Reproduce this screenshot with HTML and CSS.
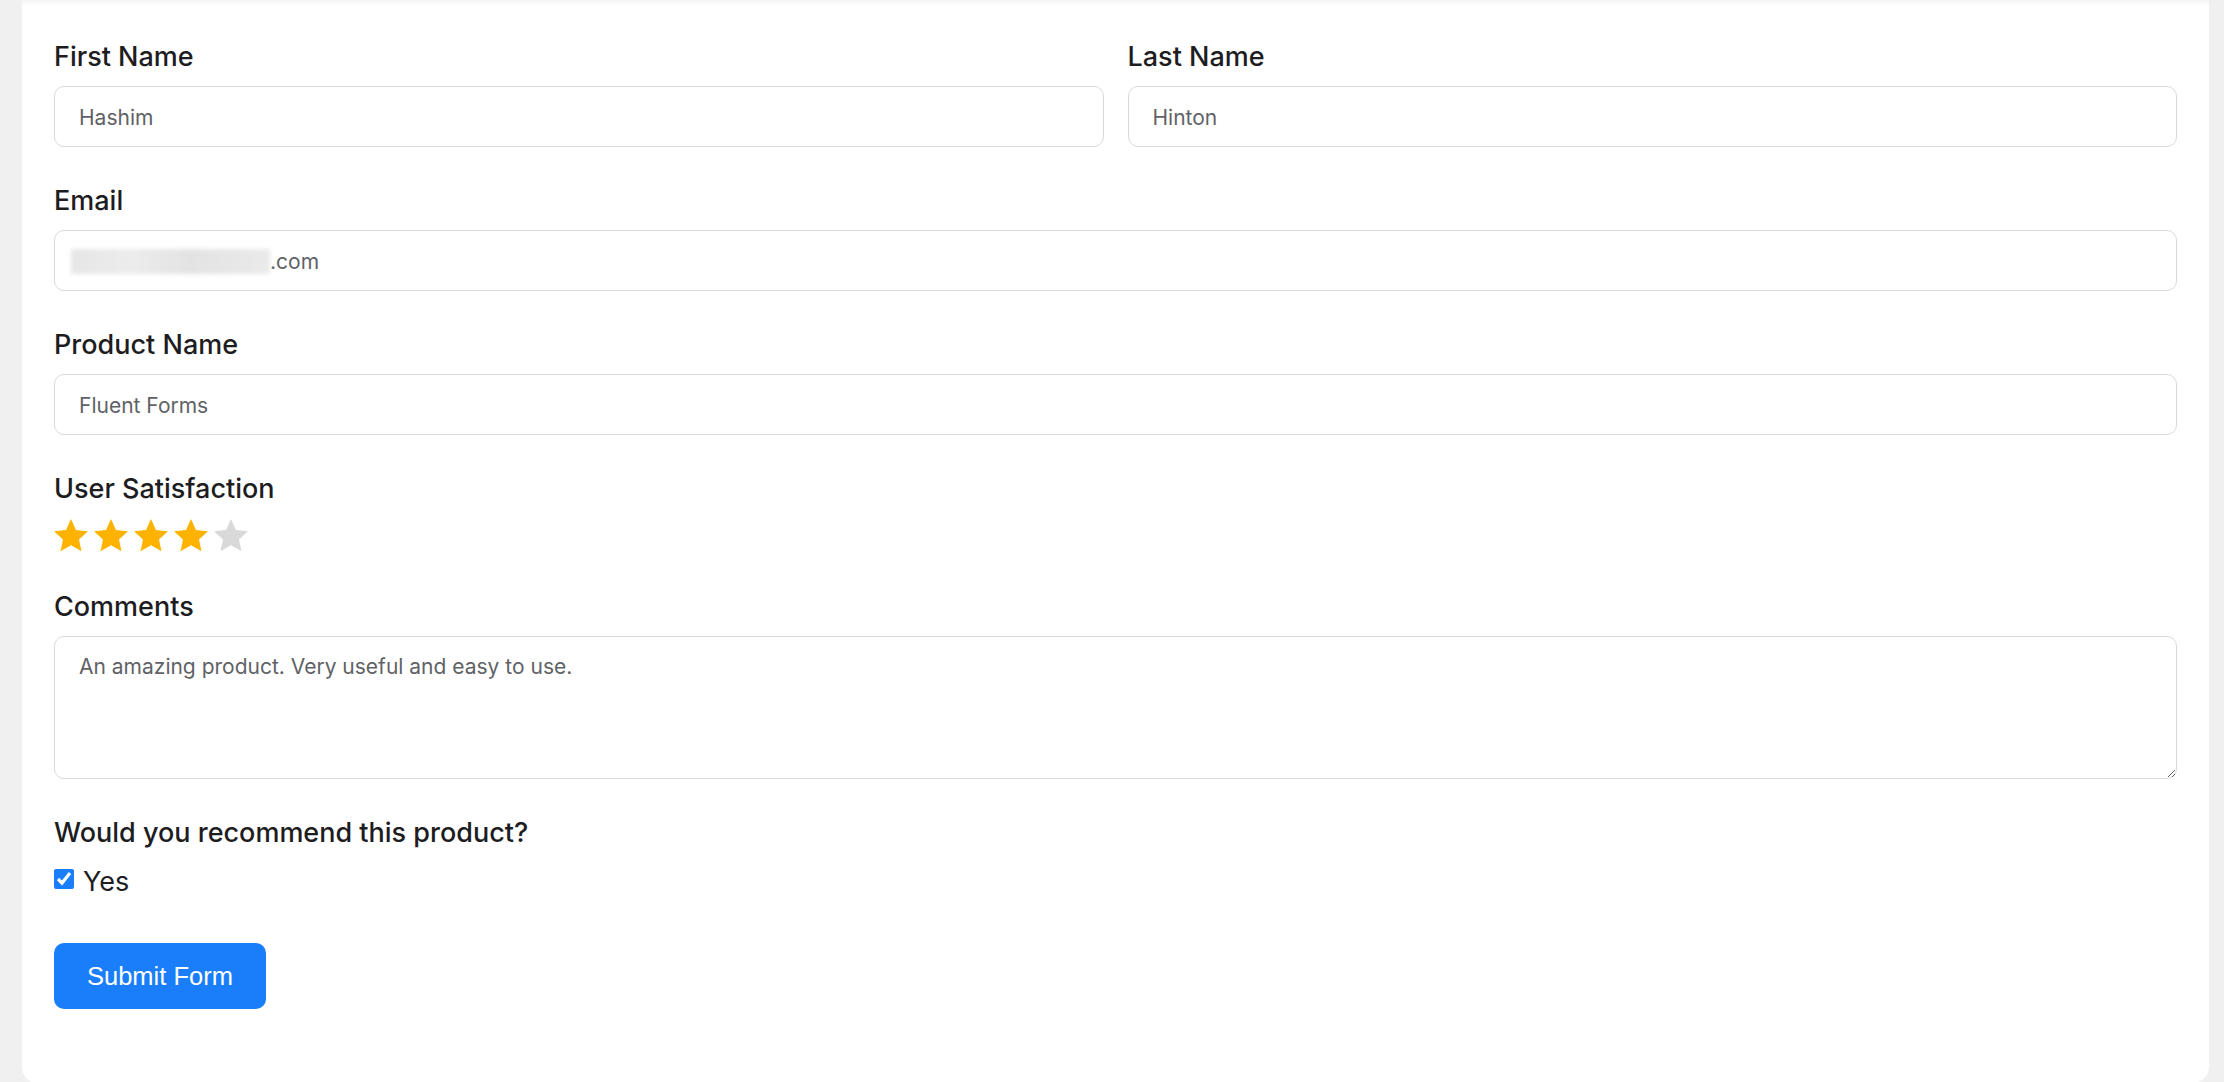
FILE: index.html
```html
<!DOCTYPE html>
<html lang="en">
<head>
<meta charset="utf-8">
<title>Product Feedback Form</title>
<link rel="stylesheet" href="styles.css">
</head>
<body>
<div class="card">
  <form class="form">
    <div class="row">
      <div class="field">
        <label class="label" for="fname">First Name</label>
        <input class="input" id="fname" type="text" value="Hashim">
      </div>
      <div class="field">
        <label class="label" for="lname">Last Name</label>
        <input class="input" id="lname" type="text" value="Hinton">
      </div>
    </div>
    <div class="field">
      <label class="label">Email</label>
      <div class="input email"><span class="redact"></span><span>.com</span></div>
    </div>
    <div class="field">
      <label class="label" for="pname">Product Name</label>
      <input class="input" id="pname" type="text" value="Fluent Forms">
    </div>
    <div class="field">
      <label class="label">User Satisfaction</label>
      <div class="stars">
        <svg class="star on" viewBox="0 0 34 33"><polygon points="17,0 21.94,11.08 34,12.35 24.99,20.48 27.51,32.35 17,26.28 6.49,32.35 9.01,20.48 0,12.35 12.06,11.08"/></svg>
        <svg class="star on" viewBox="0 0 34 33"><polygon points="17,0 21.94,11.08 34,12.35 24.99,20.48 27.51,32.35 17,26.28 6.49,32.35 9.01,20.48 0,12.35 12.06,11.08"/></svg>
        <svg class="star on" viewBox="0 0 34 33"><polygon points="17,0 21.94,11.08 34,12.35 24.99,20.48 27.51,32.35 17,26.28 6.49,32.35 9.01,20.48 0,12.35 12.06,11.08"/></svg>
        <svg class="star on" viewBox="0 0 34 33"><polygon points="17,0 21.94,11.08 34,12.35 24.99,20.48 27.51,32.35 17,26.28 6.49,32.35 9.01,20.48 0,12.35 12.06,11.08"/></svg>
        <svg class="star off" viewBox="0 0 34 33"><polygon points="17,0 21.94,11.08 34,12.35 24.99,20.48 27.51,32.35 17,26.28 6.49,32.35 9.01,20.48 0,12.35 12.06,11.08"/></svg>
      </div>
    </div>
    <div class="field">
      <label class="label" for="comments">Comments</label>
      <textarea class="input textarea" id="comments">An amazing product. Very useful and easy to use.</textarea>
    </div>
    <div class="field field-check">
      <label class="label">Would you recommend this product?</label>
      <label class="check"><input type="checkbox" checked><span>Yes</span></label>
    </div>
    <button class="submit" type="button">Submit Form</button>
  </form>
</div>
</body>
</html>
```
FILE: styles.css
```css
* { box-sizing: border-box; }
html, body { margin: 0; }
body {
  background: #f0f0f1;
  padding: 0 15px 0 22px;
  font-family: Inter, "Noto Sans", sans-serif;
}
.card {
  background: linear-gradient(#f3f3f3 0, #ffffff 6px);
  border-radius: 0 0 16px 16px;
  padding: 37px 32px 74px;
}
.row {
  display: grid;
  grid-template-columns: 1fr 1fr;
  gap: 24px;
}
.field { margin-bottom: 34px; }
.field-check { margin-bottom: 41px; }
.label {
  display: block;
  font-size: 27px;
  line-height: 40px;
  font-weight: 500;
  color: #1d1d1f;
  margin-bottom: 9px;
}
.input {
  display: block;
  width: 100%;
  height: 61px;
  border: 1px solid #dadada;
  border-radius: 10px;
  padding: 2px 24px 0;
  font-family: Inter, "Noto Sans", sans-serif;
  font-size: 21px;
  line-height: 1.5;
  color: #606266;
  background: #fff;
  outline: none;
}
.email {
  display: flex;
  align-items: center;
  padding-left: 25px;
}
.redact {
  display: inline-block;
  width: 199px;
  height: 25px;
  margin-left: -9px;
  background: linear-gradient(90deg, #e6e6e6, #ececec 30%, #e3e3e3 60%, #eaeaea);
  filter: blur(2px);
}
.textarea {
  height: 143px;
  padding: 14px 24px 12px;
  resize: vertical;
}
.stars {
  display: flex;
  align-items: center;
  gap: 6px;
  height: 35px;
}
.star { width: 34px; height: 33px; display: block; }
.star.on { fill: #fdb300; }
.star.off { fill: #d9d9d9; }
.check {
  display: flex;
  align-items: flex-start;
  gap: 9px;
  font-size: 27px;
  line-height: 40px;
  color: #1d1d1f;
  margin-top: 1px;
}
.check input {
  width: 20px;
  height: 20px;
  margin: 7px 0 0 0;
  accent-color: #1a7efb;
}
.submit {
  display: block;
  height: 66px;
  padding: 0 33px;
  background: #1a7efb;
  color: #fff;
  border: none;
  border-radius: 10px;
  font-family: "Liberation Sans", Arial, sans-serif;
  font-size: 25.5px;
}
```
